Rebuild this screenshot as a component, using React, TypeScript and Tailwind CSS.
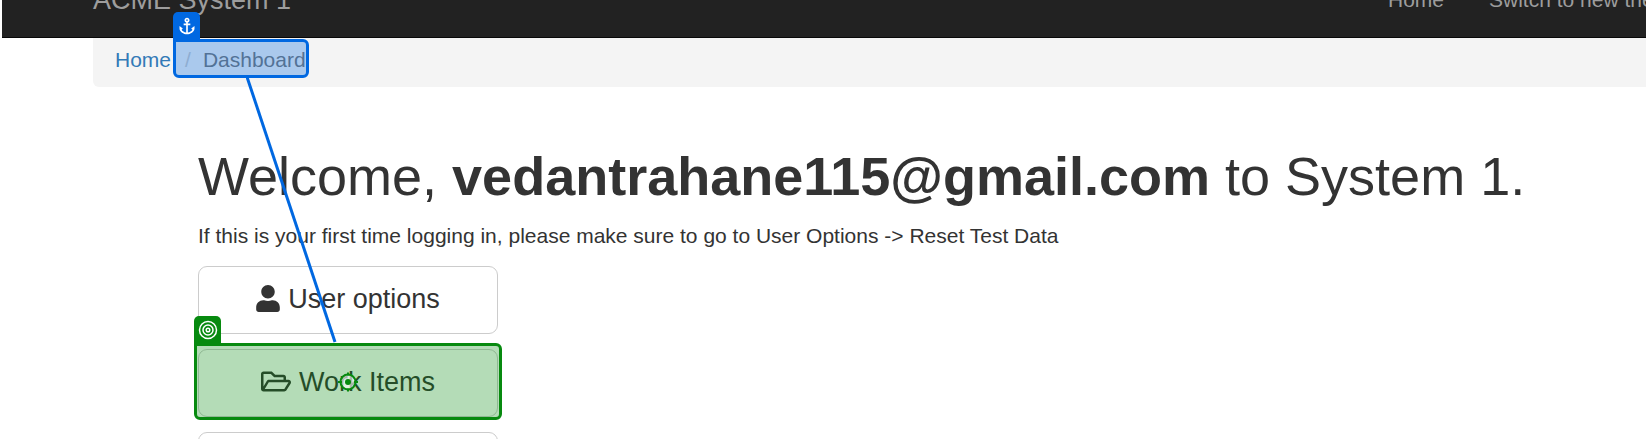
import type { ReactNode } from "react";
import { FaRegFolderOpen, FaUser } from "react-icons/fa";
import { MdAnchor } from "react-icons/md";

function MenuButton({ children, label }: { children?: ReactNode; label?: string }) {
  return (
    <button
      type="button"
      aria-label={label}
      className="flex h-17 w-full shrink-0 items-center justify-center gap-2 rounded-[9px] border border-[#cccccc] bg-white pb-0.5 text-[27px] leading-9 text-[#333333]"
    >
      {children}
    </button>
  );
}

function TargetRings() {
  return (
    <svg viewBox="0 0 20 20" className="h-5 w-5" fill="none" stroke="white" aria-hidden="true">
      <circle cx="10" cy="10" r="8.5" strokeWidth="1.5" />
      <circle cx="10" cy="10" r="5" strokeWidth="1.5" />
      <circle cx="10" cy="10" r="1.8" strokeWidth="1.5" />
    </svg>
  );
}

function ClickPoint() {
  return (
    <svg viewBox="0 0 22 22" className="h-[22px] w-[22px]" fill="none" stroke="#078a0f" aria-hidden="true">
      <circle cx="11" cy="11" r="7.5" fill="white" fillOpacity="0.6" strokeWidth="2" />
      <circle cx="11" cy="11" r="3" fill="#078a0f" stroke="none" />
      <path d="M11 1.5v3M11 17.5v3M1 11h4M17 11h4" strokeWidth="2" />
    </svg>
  );
}

export default function App() {
  return (
    <div className="relative h-screen overflow-hidden bg-white font-['Liberation_Sans',Arial,sans-serif] text-[21px] leading-[30px] text-[#333333]">
      <header className="ml-0.5 flex h-[38px] items-end overflow-hidden border-b border-[#080808] bg-[#222222] text-[#9d9d9d]">
        <div className="flex h-[75px] w-full items-center whitespace-nowrap">
          <a href="#" className="ml-[91px] text-[27px]">
            ACME System 1
          </a>
          <nav className="ml-auto flex w-[258px] gap-[45px] overflow-hidden">
            <a href="#">Home</a>
            <a href="#">Switch to new theme</a>
          </nav>
        </div>
      </header>

      <nav aria-label="Breadcrumb" className="ml-[93px] rounded-bl-md bg-[#f4f4f4] pt-[7px] pb-3 pl-[22px]">
        <ol className="flex">
          <li>
            <a href="#" className="text-[#337ab7]">
              Home
            </a>
          </li>
          <li className="relative ml-1.5 flex text-[#777777]">
            <span className="pr-3 pl-2 text-[#cccccc]">/</span>
            <span>Dashboard</span>
            <span className="absolute -top-1.5 -right-[3px] -left-1 z-10 h-[39px] rounded-md rounded-tl-none border-3 border-[#0068e1] bg-[#0068e1]/30" />
            <span className="absolute -top-[33px] -left-1 z-10 flex h-[27px] w-[27px] items-center justify-center rounded-t-[5px] bg-[#0068e1] text-white">
              <MdAnchor className="h-5 w-5" />
            </span>
          </li>
        </ol>
      </nav>

      <main className="pt-15 pl-[198px]">
        <h1 className="text-[54px] leading-[59px] whitespace-nowrap">
          Welcome, <strong>vedantrahane115@gmail.com</strong> to System 1.
        </h1>
        <p className="mt-[15px]">
          If this is your first time logging in, please make sure to go to User Options -&gt; Reset Test Data
        </p>
        <div className="mt-[15px] flex w-[300px] flex-col gap-[15px]">
          <MenuButton>
            <FaUser className="mb-0.5 h-[27px] w-6" />
            User options
          </MenuButton>
          <div className="relative">
            <MenuButton>
              <FaRegFolderOpen className="mb-0.5 h-[27px] w-[30px]" />
              Work Items
            </MenuButton>
            <span className="pointer-events-none absolute -inset-x-1 -top-1.5 -bottom-[3px] flex items-center justify-center rounded-md rounded-tl-none border-3 border-[#078a0f] bg-[#078a0f]/30">
              <ClickPoint />
            </span>
            <span className="absolute -top-[33px] -left-1 flex h-[27px] w-[27px] items-center justify-center rounded-t-[5px] bg-[#078a0f]">
              <TargetRings />
            </span>
          </div>
          <MenuButton label="More options" />
        </div>
      </main>

      <svg
        viewBox="0 0 100 270"
        className="pointer-events-none absolute top-[77px] left-[246px] h-[270px] w-[100px]"
        aria-hidden="true"
      >
        <path d="M1 0L89 265" stroke="#0068e1" strokeWidth="3" />
      </svg>
    </div>
  );
}
